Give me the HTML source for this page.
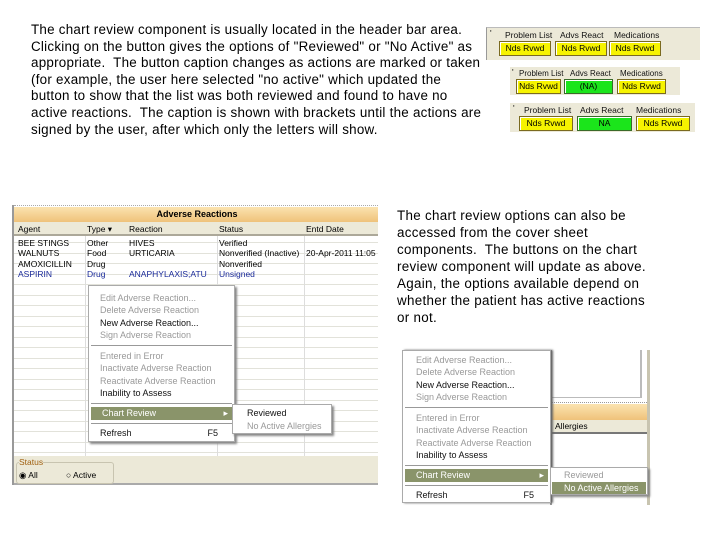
<!DOCTYPE html>
<html><head><meta charset="utf-8">
<style>
*{margin:0;padding:0;box-sizing:border-box}
body{width:720px;height:540px;background:#fff;position:relative;overflow:hidden;font-family:"Liberation Sans",sans-serif;color:#000}
.a{position:absolute}
.t{position:absolute;font-size:13.4px;white-space:nowrap;line-height:16.6px}
.p{background:#ece9d8;position:absolute;font-size:8.5px}
.btn{position:absolute;height:15px;border:1px solid #7a6a20;background:#f6f300;font-size:8.5px;text-align:center;line-height:13px;box-shadow:inset 1px 1px 0 #fff}
.g{background:#1be51b;border-color:#3a6a2a}
.hdr{position:absolute;font-size:8.5px;color:#111;white-space:nowrap}
.s{font-size:8.5px;position:absolute;white-space:nowrap}
.gl{position:absolute;left:0;height:1px;background:#e2e2da}
.menu{position:absolute;background:#fff;border:1px solid #aaa;box-shadow:2px 2px 2px #888;font-size:9px}
.mi{position:absolute;left:0;right:0;height:12px;line-height:12px;padding-left:11px;color:#999;white-space:nowrap}
.b{color:#111}
.hl{background:#8a946a;color:#fff}
.sep{position:absolute;left:2px;right:2px;height:1px;background:#999}
</style></head><body>
<div class="t" style="left:31px;top:22px;width:452px;overflow:hidden;letter-spacing:0.25px">The chart review component is usually located in the header bar area.<br>Clicking on the button gives the options of "Reviewed" or "No Active" as<br>appropriate.&nbsp; The button caption changes as actions are marked or taken<br>(for example, the user here selected "no active" which updated the<br>button to show that the list was both reviewed and found to have no<br>active reactions.&nbsp; The caption is shown with brackets until the actions are<br>signed by the user, after which only the letters will show.</div>

<div class="t" style="left:397px;top:207px;line-height:17px;letter-spacing:0.3px">The chart review options can also be<br>accessed from the cover sheet<br>components.&nbsp; The buttons on the chart<br>review component will update as above.<br>Again, the options available depend on<br>whether the patient has active reactions<br>or not.</div>

<!-- panel 1 -->
<div class="p" style="left:486px;top:27px;width:214px;height:33px;border-left:1px solid #999;border-top:1px solid #bbb">
<span class="hdr" style="left:3px;top:0">'</span>
<span class="hdr" style="left:18px;top:2px">Problem List</span>
<span class="hdr" style="left:73px;top:2px">Advs React</span>
<span class="hdr" style="left:127px;top:2px">Medications</span>
<div class="btn" style="left:12px;top:13px;width:52px">Nds Rvwd</div>
<div class="btn" style="left:68px;top:13px;width:52px">Nds Rvwd</div>
<div class="btn" style="left:122px;top:13px;width:52px">Nds Rvwd</div>
</div>
<!-- panel 2 -->
<div class="p" style="left:510px;top:67px;width:170px;height:28px">
<span class="hdr" style="left:2px;top:0">'</span>
<span class="hdr" style="left:9px;top:2px;font-size:8px">Problem List</span>
<span class="hdr" style="left:60px;top:2px;font-size:8px">Advs React</span>
<span class="hdr" style="left:110px;top:2px;font-size:8px">Medications</span>
<div class="btn" style="left:6px;top:12px;width:45px">Nds Rvwd</div>
<div class="btn g" style="left:54px;top:12px;width:49px">(NA)</div>
<div class="btn" style="left:107px;top:12px;width:49px">Nds Rvwd</div>
</div>
<!-- panel 3 -->
<div class="p" style="left:510px;top:103px;width:185px;height:29px">
<span class="hdr" style="left:3px;top:0">'</span>
<span class="hdr" style="left:14px;top:2px">Problem List</span>
<span class="hdr" style="left:70px;top:2px">Advs React</span>
<span class="hdr" style="left:126px;top:2px">Medications</span>
<div class="btn" style="left:9px;top:13px;width:54px">Nds Rvwd</div>
<div class="btn g" style="left:67px;top:13px;width:55px">NA</div>
<div class="btn" style="left:126px;top:13px;width:54px">Nds Rvwd</div>
</div>

<!-- Adverse reactions window -->
<div class="a" style="left:12px;top:205px;width:366px;height:280px;background:#fff;border-left:2px solid #999;overflow:hidden">
<div class="a" style="left:0;top:0;width:366px;height:2px;border-top:1px dotted #aaa"></div>
<div class="a" style="left:0;top:2px;width:366px;height:15px;background:linear-gradient(#fbe3b0,#efc27a);font-size:9px;font-weight:bold;text-align:center;line-height:15px">Adverse Reactions</div>
<div class="a" style="left:0;top:17px;width:366px;height:14px;background:#ece9d8;border-bottom:2px solid #aca899"></div>
<span class="s" style="left:4px;top:19px">Agent</span>
<span class="s" style="left:73px;top:19px">Type ▾</span>
<span class="s" style="left:115px;top:19px">Reaction</span>
<span class="s" style="left:205px;top:19px">Status</span>
<span class="s" style="left:292px;top:19px">Entd Date</span>
<div class="gl" style="top:37px;width:366px"></div>
<div class="gl" style="top:48px;width:366px"></div>
<div class="gl" style="top:58px;width:366px"></div>
<div class="gl" style="top:69px;width:366px"></div>
<div class="gl" style="top:79px;width:366px"></div>
<div class="gl" style="top:90px;width:366px"></div>
<div class="gl" style="top:100px;width:366px"></div>
<div class="gl" style="top:111px;width:366px"></div>
<div class="gl" style="top:121px;width:366px"></div>
<div class="gl" style="top:132px;width:366px"></div>
<div class="gl" style="top:142px;width:366px"></div>
<div class="gl" style="top:153px;width:366px"></div>
<div class="gl" style="top:163px;width:366px"></div>
<div class="gl" style="top:174px;width:366px"></div>
<div class="gl" style="top:184px;width:366px"></div>
<div class="gl" style="top:195px;width:366px"></div>
<div class="gl" style="top:205px;width:366px"></div>
<div class="gl" style="top:216px;width:366px"></div>
<div class="gl" style="top:226px;width:366px"></div>
<div class="gl" style="top:237px;width:366px"></div>
<div class="gl" style="top:247px;width:366px"></div>
<div class="a" style="left:71px;top:31px;width:1px;height:220px;background:#ddd"></div>
<div class="a" style="left:203px;top:31px;width:1px;height:220px;background:#ddd"></div>
<div class="a" style="left:290px;top:31px;width:1px;height:220px;background:#ddd"></div>
<span class="s" style="left:4px;top:33px">BEE STINGS</span><span class="s" style="left:73px;top:33px">Other</span><span class="s" style="left:115px;top:33px">HIVES</span><span class="s" style="left:205px;top:33px">Verified</span>
<span class="s" style="left:4px;top:43px">WALNUTS</span><span class="s" style="left:73px;top:43px">Food</span><span class="s" style="left:115px;top:43px">URTICARIA</span><span class="s" style="left:205px;top:43px">Nonverified (Inactive)</span><span class="s" style="left:292px;top:43px">20-Apr-2011 11:05</span>
<span class="s" style="left:4px;top:54px">AMOXICILLIN</span><span class="s" style="left:73px;top:54px">Drug</span><span class="s" style="left:205px;top:54px">Nonverified</span>
<span class="s" style="left:4px;top:64px;color:#1a2a9a">ASPIRIN</span><span class="s" style="left:73px;top:64px;color:#1a2a9a">Drug</span><span class="s" style="left:115px;top:64px;color:#1a2a9a">ANAPHYLAXIS;ATU</span><span class="s" style="left:205px;top:64px;color:#1a2a9a">Unsigned</span>
<div class="a" style="left:0;top:251px;width:366px;height:29px;background:#ece9d8;border-bottom:2px solid #aaa"></div>
<div class="a" style="left:2px;top:257px;width:98px;height:22px;border:1px solid #c8c4b0;border-radius:3px"></div>
<span class="s" style="left:5px;top:252px;color:#a06010;background:#ece9d8">Status</span>
<span class="s" style="left:5px;top:265px">◉ All</span>
<span class="s" style="left:52px;top:265px">○ Active</span>
</div>

<div class="menu" style="left:88px;top:285px;width:147px;height:157px">
<div class="mi" style="top:6px">Edit Adverse Reaction...</div>
<div class="mi" style="top:18px">Delete Adverse Reaction</div>
<div class="mi b" style="top:31px">New Adverse Reaction...</div>
<div class="mi" style="top:43px">Sign Adverse Reaction</div>
<div class="sep" style="top:59px"></div>
<div class="mi" style="top:64px">Entered in Error</div>
<div class="mi" style="top:76px">Inactivate Adverse Reaction</div>
<div class="mi" style="top:89px">Reactivate Adverse Reaction</div>
<div class="mi b" style="top:101px">Inability to Assess</div>
<div class="sep" style="top:117px"></div>
<div class="mi hl" style="top:121px;left:2px;right:2px;height:13px">Chart Review<span style="position:absolute;right:4px">▸</span></div>
<div class="sep" style="top:137px"></div>
<div class="mi b" style="top:141px">Refresh<span style="position:absolute;right:16px">F5</span></div>
</div>
<div class="menu" style="left:232px;top:404px;width:100px;height:30px">
<div class="mi b" style="top:2px;padding-left:14px">Reviewed</div>
<div class="mi" style="top:15px;padding-left:14px">No Active Allergies</div>
</div>

<!-- background window right -->
<div class="a" style="left:550px;top:350px;width:100px;height:155px;background:#fff;border-left:2px solid #999;border-right:3px solid #c8c4b0">
<div class="a" style="left:0;top:52px;width:95px;height:2px;border-top:1px dotted #999"></div>
<div class="a" style="left:0;top:54px;width:95px;height:16px;background:linear-gradient(#fbe3b0,#efc27a)"></div>
<div class="a" style="left:0;top:70px;width:95px;height:14px;background:#ece9d8;border-bottom:2px solid #777"></div>
<span class="s" style="left:3px;top:71px">Allergies</span>
<div class="a" style="left:-2px;top:0;width:92px;height:48px;border-right:2px solid #bbb;border-bottom:1px solid #bbb"></div>
</div>

<div class="menu" style="left:402px;top:350px;width:149px;height:153px;box-shadow:2px 0 2px #666">
<div class="mi" style="top:3px;padding-left:13px">Edit Adverse Reaction...</div>
<div class="mi" style="top:15px;padding-left:13px">Delete Adverse Reaction</div>
<div class="mi b" style="top:28px;padding-left:13px">New Adverse Reaction...</div>
<div class="mi" style="top:40px;padding-left:13px">Sign Adverse Reaction</div>
<div class="sep" style="top:56px"></div>
<div class="mi" style="top:61px;padding-left:13px">Entered in Error</div>
<div class="mi" style="top:73px;padding-left:13px">Inactivate Adverse Reaction</div>
<div class="mi" style="top:86px;padding-left:13px">Reactivate Adverse Reaction</div>
<div class="mi b" style="top:98px;padding-left:13px">Inability to Assess</div>
<div class="sep" style="top:114px"></div>
<div class="mi hl" style="top:118px;left:2px;right:2px;height:13px">Chart Review<span style="position:absolute;right:4px">▸</span></div>
<div class="sep" style="top:134px"></div>
<div class="mi b" style="top:138px;padding-left:13px">Refresh<span style="position:absolute;right:16px">F5</span></div>
</div>
<div class="menu" style="left:550px;top:467px;width:98px;height:28px">
<div class="mi" style="top:1px;padding-left:13px">Reviewed</div>
<div class="mi hl" style="top:14px;left:1px;right:1px;padding-left:12px">No Active Allergies</div>
</div>
</body></html>
